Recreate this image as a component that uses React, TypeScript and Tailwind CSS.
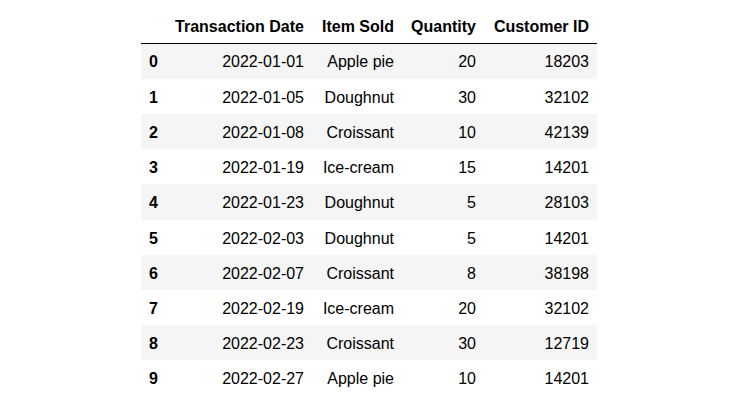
import React from "react";

const rows: [string, string, number, number][] = [
  ["2022-01-01", "Apple pie", 20, 18203],
  ["2022-01-05", "Doughnut", 30, 32102],
  ["2022-01-08", "Croissant", 10, 42139],
  ["2022-01-19", "Ice-cream", 15, 14201],
  ["2022-01-23", "Doughnut", 5, 28103],
  ["2022-02-03", "Doughnut", 5, 14201],
  ["2022-02-07", "Croissant", 8, 38198],
  ["2022-02-19", "Ice-cream", 20, 32102],
  ["2022-02-23", "Croissant", 30, 12719],
  ["2022-02-27", "Apple pie", 10, 14201],
];

const rowClass = [
  "h-[36px] bg-[#f5f5f5]",
  "h-[35px] bg-white",
  "h-[35px] bg-[#f5f5f5]",
  "h-[35px] bg-white",
  "h-[36px] bg-[#f5f5f5]",
  "h-[35px] bg-white",
  "h-[35px] bg-[#f5f5f5]",
  "h-[35px] bg-white",
  "h-[35px] bg-[#f5f5f5]",
  "h-[36px] bg-white",
];

export default function App() {
  return (
    <div className="w-[735px] h-[400px] bg-white pt-[9px] overflow-hidden font-['Liberation_Sans',Arial,sans-serif] text-[16px] text-black">
      <table className="ml-[141px] w-[456px] table-fixed border-collapse">
        <colgroup>
          <col className="w-[25px]" />
          <col className="w-[146px]" />
          <col className="w-[90px]" />
          <col className="w-[82px]" />
          <col className="w-[113px]" />
        </colgroup>
        <thead>
          <tr className="h-[34px] border-b border-black">
            <th className="px-2 pt-[2px] text-right font-bold align-middle"></th>
            <th className="px-2 pt-[2px] text-right font-bold align-middle whitespace-nowrap">Transaction Date</th>
            <th className="px-2 pt-[2px] text-right font-bold align-middle whitespace-nowrap">Item Sold</th>
            <th className="px-2 pt-[2px] text-right font-bold align-middle whitespace-nowrap">Quantity</th>
            <th className="px-2 pt-[2px] text-right font-bold align-middle whitespace-nowrap">Customer ID</th>
          </tr>
        </thead>
        <tbody>
          {rows.map((r, i) => (
            <tr key={i} className={rowClass[i]}>
              <th className="px-2 pt-[2px] text-left font-bold align-middle">{i}</th>
              <td className="px-2 pt-[2px] text-right align-middle whitespace-nowrap">{r[0]}</td>
              <td className="px-2 pt-[2px] text-right align-middle whitespace-nowrap">{r[1]}</td>
              <td className="px-2 pt-[2px] text-right align-middle whitespace-nowrap">{r[2]}</td>
              <td className="px-2 pt-[2px] text-right align-middle whitespace-nowrap">{r[3]}</td>
            </tr>
          ))}
        </tbody>
      </table>
    </div>
  );
}
